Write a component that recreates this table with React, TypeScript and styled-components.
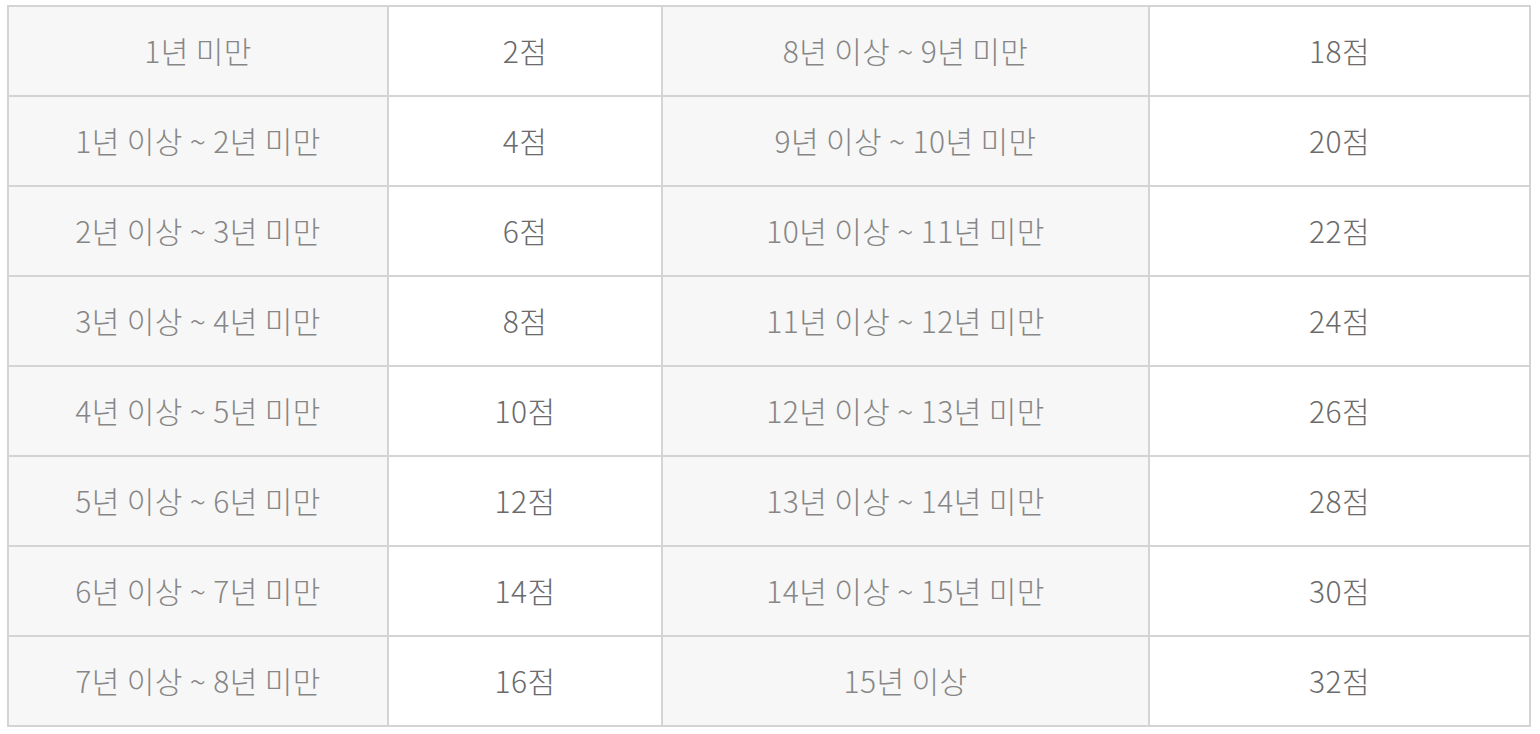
import React from "react";
import styled, { createGlobalStyle } from "styled-components";

const Global = createGlobalStyle`
  html, body { margin: 0; padding: 0; background: #ffffff; }
  body { font-family: "Noto Sans CJK KR", "Noto Sans", sans-serif; }
`;

const Page = styled.div`
  padding: 5px 0 0 7px;
`;

const Grid = styled.div`
  display: grid;
  grid-template-columns: 380px 274px 487px 381px;
  width: 1524px;
  box-sizing: border-box;
  border-top: 2px solid #d4d4d4;
  border-left: 2px solid #d4d4d4;
`;

const Cell = styled.div<{ $label?: boolean }>`
  box-sizing: border-box;
  height: 90px;
  display: flex;
  align-items: center;
  justify-content: center;
  border-right: 2px solid #d4d4d4;
  border-bottom: 2px solid #d4d4d4;
  background: ${(p) => (p.$label ? "#f7f7f7" : "#ffffff")};
  color: ${(p) => (p.$label ? "#868686" : "#6a6a6a")};
  font-size: 30px;
  font-weight: 300;
  letter-spacing: 0.4px;
  line-height: 1;
  padding-bottom: 2px;
`;

const rows: [string, string, string, string][] = [
  ["1년 미만", "2점", "8년 이상 ~ 9년 미만", "18점"],
  ["1년 이상 ~ 2년 미만", "4점", "9년 이상 ~ 10년 미만", "20점"],
  ["2년 이상 ~ 3년 미만", "6점", "10년 이상 ~ 11년 미만", "22점"],
  ["3년 이상 ~ 4년 미만", "8점", "11년 이상 ~ 12년 미만", "24점"],
  ["4년 이상 ~ 5년 미만", "10점", "12년 이상 ~ 13년 미만", "26점"],
  ["5년 이상 ~ 6년 미만", "12점", "13년 이상 ~ 14년 미만", "28점"],
  ["6년 이상 ~ 7년 미만", "14점", "14년 이상 ~ 15년 미만", "30점"],
  ["7년 이상 ~ 8년 미만", "16점", "15년 이상", "32점"],
];

export default function App() {
  return (
    <Page>
      <Global />
      <Grid>
        {rows.map((r, i) => (
          <React.Fragment key={i}>
            <Cell $label>{r[0]}</Cell>
            <Cell>{r[1]}</Cell>
            <Cell $label>{r[2]}</Cell>
            <Cell>{r[3]}</Cell>
          </React.Fragment>
        ))}
      </Grid>
    </Page>
  );
}
